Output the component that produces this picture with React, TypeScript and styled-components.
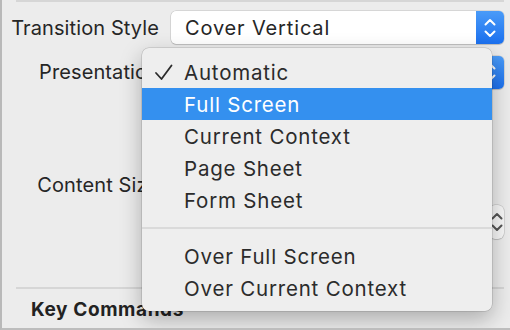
import styled, { createGlobalStyle } from 'styled-components';

const GlobalStyle = createGlobalStyle`
	html, body {
		margin: 0;
		padding: 0;
		background: #ececec;
	}
	body {
		font-family: Inter, "Noto Sans", sans-serif;
		-webkit-font-smoothing: antialiased;
	}
`;

const Inspector = styled.div`
	position: relative;
	width: 510px;
	height: 330px;
	box-sizing: border-box;
	background: #ececec;
	border-left: 2px solid #b9b9b9;
	border-bottom: 2px solid #bdbdbd;
	overflow: hidden;
	color: #262626;
`;

const TopRule = styled.div`
	height: 2px;
	margin: 0 6px 0 14px;
	background: #d6d6d6;
`;

const Form = styled.div`
	display: grid;
	grid-template-columns: 148px 1fr;
	column-gap: 10px;
	align-items: center;
	padding: 9px 6px 0 9px;
`;

const Label = styled.div<{ $height: number }>`
	height: ${({ $height }) => $height}px;
	display: flex;
	align-items: center;
	justify-content: flex-end;
	white-space: nowrap;
	font-size: 20px;
	letter-spacing: 0.1px;
`;

const Popup = styled.div`
	height: 33px;
	display: flex;
	align-items: stretch;
	background: #fff;
	border-radius: 5px;
	box-shadow: 0 0 0 0.5px rgba(0, 0, 0, 0.18), 0 1px 1px rgba(0, 0, 0, 0.12);
	overflow: hidden;
	margin-left: 2px;
`;

const PopupText = styled.div`
	flex: 1;
	display: flex;
	align-items: center;
	padding-left: 14px;
	white-space: nowrap;
	font-size: 20px;
	letter-spacing: 0.85px;
`;

const PopupArrows = styled.div`
	width: 28px;
	display: flex;
	align-items: center;
	justify-content: center;
	background: linear-gradient(#4a9bf8, #1b70ef);
`;

const Spacer = styled.div<{ $height: number }>`
	grid-column: 1 / -1;
	height: ${({ $height }) => $height}px;
`;

const SizeControls = styled.div`
	display: flex;
	justify-content: flex-end;
	align-self: start;
	margin-top: 37px;
	margin-bottom: -37px;
`;

const Stepper = styled.div`
	width: 15px;
	height: 34px;
	display: flex;
	align-items: center;
	justify-content: center;
	background: #f7f7f7;
	border-radius: 6px;
	box-shadow: 0 0 0 0.5px rgba(0, 0, 0, 0.2), 0 1px 1px rgba(0, 0, 0, 0.1);
`;

const SectionRule = styled.div`
	height: 2px;
	margin: 85px 6px 0 14px;
	background: #d6d6d6;
`;

const SectionTitle = styled.div`
	padding: 9px 0 0 29px;
	font-weight: 700;
	font-size: 19px;
	letter-spacing: 0.6px;
	color: #222;
`;

const Menu = styled.div`
	position: absolute;
	left: 140px;
	top: 48px;
	width: 350px;
	box-sizing: border-box;
	padding: 8px 0 7px;
	background: #eeeeee;
	border-radius: 7px;
	box-shadow: 0 0 0 0.5px rgba(0, 0, 0, 0.2), 0 8px 22px rgba(0, 0, 0, 0.28);
`;

const Item = styled.div<{ $selected?: boolean }>`
	height: 32px;
	display: flex;
	align-items: center;
	padding-left: 42px;
	position: relative;
	white-space: nowrap;
	font-size: 20.5px;
	letter-spacing: 0.8px;
	color: ${({ $selected }) => ($selected ? '#fff' : '#2b2b2b')};
	background: ${({ $selected }) => ($selected ? '#3490ef' : 'transparent')};
`;

const Check = styled.svg`
	position: absolute;
	left: 12px;
	top: 7px;
`;

const Separator = styled.div`
	height: 24px;
	display: flex;
	align-items: center;

	&::after {
		content: '';
		flex: 1;
		height: 2px;
		margin-top: -1px;
		background: #dadada;
	}
`;

const Chevrons = ({ color }: { color: string }) => (
	<svg width='14' height='24' viewBox='0 0 14 24'>
		<polyline points='2.5,8.5 7,4 11.5,8.5' fill='none' stroke={color} strokeWidth='2' strokeLinecap='round' strokeLinejoin='round' />
		<polyline points='2.5,15.5 7,20 11.5,15.5' fill='none' stroke={color} strokeWidth='2' strokeLinecap='round' strokeLinejoin='round' />
	</svg>
);

const options = ['Automatic', 'Full Screen', 'Current Context', 'Page Sheet', 'Form Sheet'];
const overOptions = ['Over Full Screen', 'Over Current Context'];

const App = () => {
	return (
		<>
			<GlobalStyle />
			<Inspector>
				<TopRule />
				<Form>
					<Label $height={33}>Transition Style</Label>
					<Popup>
						<PopupText>Cover Vertical</PopupText>
						<PopupArrows>
							<Chevrons color='#fff' />
						</PopupArrows>
					</Popup>
					<Spacer $height={11} />
					<Label $height={34}>Presentation</Label>
					<Popup>
						<PopupText>Full Screen</PopupText>
						<PopupArrows>
							<Chevrons color='#fff' />
						</PopupArrows>
					</Popup>
					<Spacer $height={79} />
					<Label $height={34}>Content Size</Label>
					<SizeControls>
						<Stepper>
							<Chevrons color='#555' />
						</Stepper>
					</SizeControls>
				</Form>
				<SectionRule />
				<SectionTitle>Key Commands</SectionTitle>

				<Menu>
					{options.map((o, i) => (
						<Item key={o} $selected={i === 1}>
							{i === 0 && (
								<Check width='20' height='20' viewBox='0 0 20 20'>
									<polyline points='2,10 7.5,16 17.5,2.5' fill='none' stroke='#2b2b2b' strokeWidth='1.8' strokeLinecap='round' strokeLinejoin='round' />
								</Check>
							)}
							{o}
						</Item>
					))}
					<Separator />
					{overOptions.map((o) => (
						<Item key={o}>{o}</Item>
					))}
				</Menu>
			</Inspector>
		</>
	);
};

export default App;
